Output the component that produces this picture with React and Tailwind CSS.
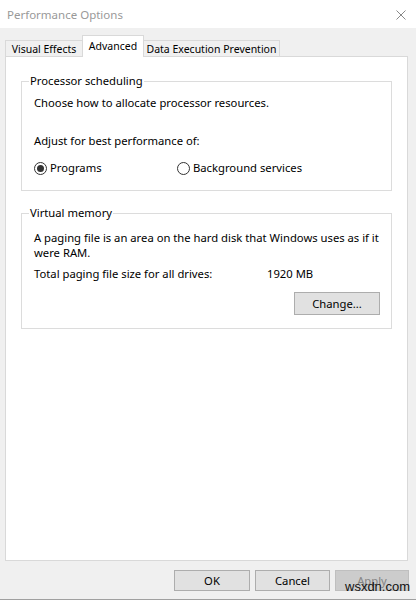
import React from "react";

function Radio({ checked, label, className = "" }) {
  return (
    <label className={`flex items-center ${className}`}>
      <span className="w-[13px] h-[13px] rounded-full border border-[#333] bg-white flex items-center justify-center">
        {checked && <span className="w-[7px] h-[7px] rounded-full bg-[#333]" />}
      </span>
      <span className="ml-[3px]">{label}</span>
    </label>
  );
}

function GroupBox({ title, className = "", innerClassName = "", children }) {
  return (
    <fieldset className={`mx-[15px] min-w-0 border border-[#dcdcdc] ${className}`}>
      <legend className="ml-[7px] px-[1px] leading-[16px]">{title}</legend>
      <div className={innerClassName}>{children}</div>
    </fieldset>
  );
}

function Button({ children, disabled = false, className = "" }) {
  return (
    <button
      className={`h-[21px] border flex items-center justify-center leading-none ${
        disabled
          ? "bg-[#cccccc] border-[#bfbfbf] text-[#838383]"
          : "bg-[#e1e1e1] border-[#adadad] text-black"
      } ${className}`}
    >
      {children}
    </button>
  );
}

export default function App() {
  return (
    <div className="relative w-[416px] h-[600px] bg-[#f0f0f0] flex flex-col border-b border-[#a0a0a0] text-[11.25px] text-black font-['Noto_Sans',sans-serif] overflow-hidden">
      {/* Title bar */}
      <div className="h-[28px] bg-white flex items-center justify-between pl-[7px] pr-[10px]">
        <span className="text-[#999] text-[11.5px] mt-[1px]">Performance Options</span>
        <svg width="10" height="10" viewBox="0 0 10 10" className="mt-[1px]">
          <path d="M0.5 0.5L9.5 9.5M9.5 0.5L0.5 9.5" stroke="#888" strokeWidth="1" />
        </svg>
      </div>

      {/* Tabs */}
      <div className="mt-[8px] h-[21px] -mb-px pl-[5px] flex items-end whitespace-nowrap text-[10.5px]">
        <div className="w-[77px] h-[17px] border border-b-0 border-r-0 border-[#d9d9d9] bg-[#f0f0f0] flex items-center justify-center leading-none pt-[1px]">
          Visual Effects
        </div>
        <div className="relative z-10 w-[62px] h-[22px] border border-b-0 border-[#d9d9d9] bg-white flex items-start justify-center pt-[2px] leading-[16px]">
          Advanced
        </div>
        <div className="w-[136px] h-[17px] border border-b-0 border-l-0 border-[#d9d9d9] bg-[#f0f0f0] flex items-center justify-center leading-none pt-[1px]">
          Data Execution Prevention
        </div>
      </div>

      {/* Tab panel */}
      <div className="flex-1 mx-[5px] mr-[8px] bg-white border border-[#d9d9d9] flex flex-col">
        <GroupBox
          title="Processor scheduling"
          className="mt-[16px]"
          innerClassName="pl-[12px] pt-[6px] pb-[14px]"
        >
          <p className="leading-[16px]">Choose how to allocate processor resources.</p>
          <p className="mt-[22px] leading-[16px]">Adjust for best performance of:</p>
          <div className="mt-[11px] flex items-center leading-[16px]">
            <Radio checked label="Programs" className="w-[143px]" />
            <Radio label="Background services" />
          </div>
        </GroupBox>

        <GroupBox
          title="Virtual memory"
          className="mt-[14px]"
          innerClassName="pl-[12px] pr-[11px] pt-[9px] pb-[13px]"
        >
          <p className="leading-[15px] whitespace-nowrap">
            A paging file is an area on the hard disk that Windows uses as if it
            <br />
            were RAM.
          </p>
          <div className="mt-[6px] flex leading-[16px]">
            <span className="w-[233px]">Total paging file size for all drives:</span>
            <span>1920 MB</span>
          </div>
          <div className="mt-[10px] flex justify-end">
            <Button className="w-[86px] h-[23px]">Change...</Button>
          </div>
        </GroupBox>
      </div>

      {/* Dialog buttons */}
      <div className="pt-[9px] pb-[8px] pr-[7px] flex justify-end gap-[5px]">
        <Button className="w-[76px]">OK</Button>
        <Button className="w-[75px]">Cancel</Button>
        <Button disabled className="w-[74px]">Apply</Button>
      </div>

      {/* Watermark */}
      <span className="absolute left-[345px] top-[580px] text-[13px] leading-none text-[#111] font-['Liberation_Sans',sans-serif]">
        wsxdn.com
      </span>
    </div>
  );
}
